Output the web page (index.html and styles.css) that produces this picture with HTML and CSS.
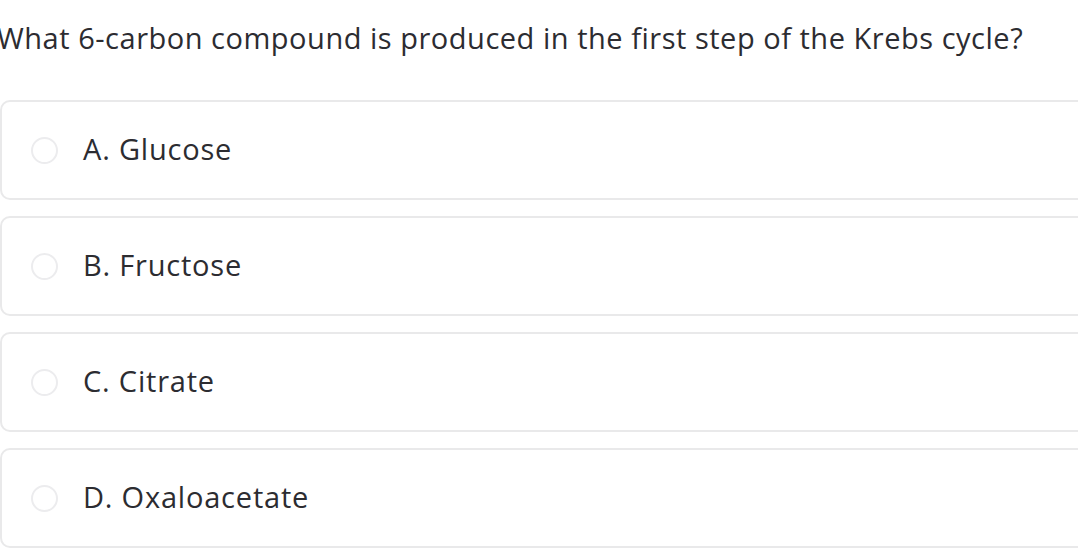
FILE: index.html
```html
<!DOCTYPE html>
<html>
<head>
<meta charset="utf-8">
<link rel="stylesheet" href="styles.css">
</head>
<body>
<div class="quiz">
  <h1 class="question">What 6-carbon compound is produced in the first step of the Krebs cycle?</h1>
  <ul class="options">
    <li class="option"><span class="radio"></span><span class="label">A. Glucose</span></li>
    <li class="option"><span class="radio"></span><span class="label">B. Fructose</span></li>
    <li class="option"><span class="radio"></span><span class="label">C. Citrate</span></li>
    <li class="option"><span class="radio"></span><span class="label">D. Oxaloacetate</span></li>
  </ul>
</div>
</body>
</html>
```
FILE: styles.css
```css
html, body {
  margin: 0;
  padding: 0;
  background: #ffffff;
  overflow: hidden;
}
.quiz {
  width: 1110px;
  font-family: "Open Sans", "Liberation Sans", sans-serif;
  color: #2c2c31;
}
.question {
  margin: 0 0 0 -3px;
  padding-top: 16px;
  height: 100px;
  box-sizing: border-box;
  font-size: 29px;
  font-weight: 400;
  letter-spacing: 0.52px;
  line-height: 44px;
  white-space: nowrap;
}
.options {
  list-style: none;
  margin: 0;
  padding: 0;
  display: flex;
  flex-direction: column;
  gap: 16px;
}
.option {
  height: 100px;
  box-sizing: border-box;
  border: 2px solid #e9e9ea;
  border-radius: 10px;
  display: flex;
  align-items: center;
  padding-left: 29px;
}
.radio {
  width: 27px;
  height: 27px;
  box-sizing: border-box;
  border: 2px solid #ececee;
  border-radius: 50%;
  flex: none;
}
.label {
  margin-left: 25px;
  padding-bottom: 3px;
  font-size: 29px;
  letter-spacing: 0.8px;
  line-height: 32px;
}
```
